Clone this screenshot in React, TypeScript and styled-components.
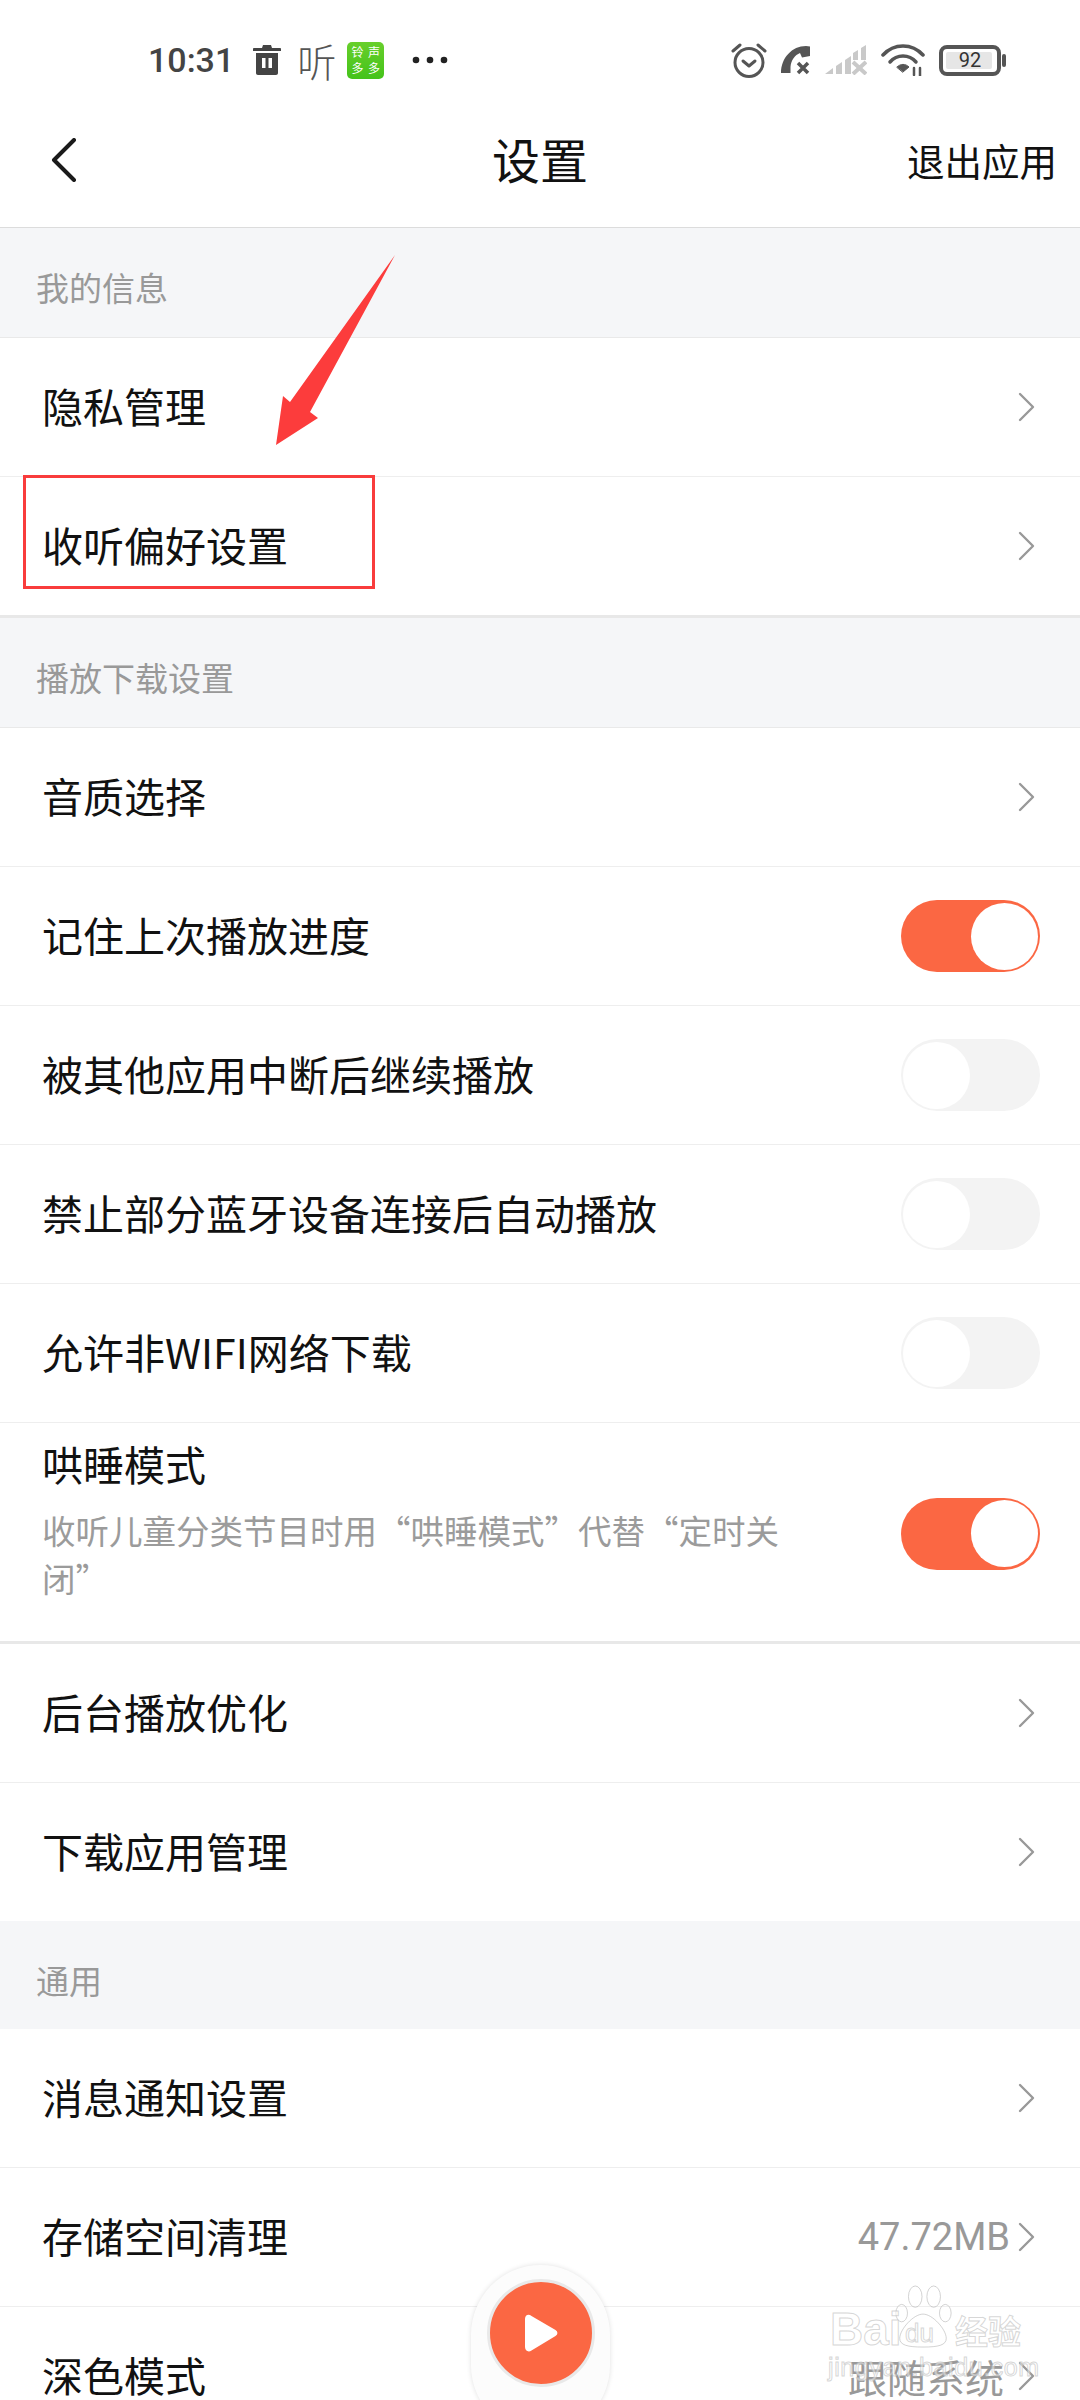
import styled, { createGlobalStyle } from 'styled-components'

const GlobalStyle = createGlobalStyle`
  html, body {
    margin: 0;
    padding: 0;
    background: #fff;
  }
  * {
    box-sizing: border-box;
  }
`

const cjk = `"Noto Sans CJK SC", "Noto Sans", sans-serif`

// Page shell
const Page = styled.div`
  position: relative;
  width: 1080px;
  height: 2400px;
  overflow: hidden;
  background: #fff;
  font-family: ${cjk};
  color: #111;
`

// Status bar
const StatusBar = styled.div`
  height: 92px;
  display: flex;
  align-items: center;
  justify-content: space-between;
  padding: 28px 72px 0 148px;
`

const StatusLeft = styled.div`
  display: flex;
  align-items: center;
`

const StatusRight = styled.div`
  display: flex;
  align-items: center;
  gap: 14px;
`

const Clock = styled.span`
  font-family: Roboto, sans-serif;
  font-weight: 500;
  font-size: 34px;
  color: #444;
  margin-right: 19px;
`

const TingGlyph = styled.span`
  font-size: 39px;
  font-weight: 300;
  line-height: 40px;
  color: #555;
  margin: 0 11px 0 16px;
`

const RingBadge = styled.span`
  width: 37px;
  height: 37px;
  border-radius: 5px;
  background: linear-gradient(to bottom, #68cf2c, #44c31a);
  display: grid;
  grid-template-columns: 1fr 1fr;
  place-items: center;
  padding: 3px 2px;
  color: #fff;
  font-size: 12px;
  line-height: 14px;
  margin-right: 28px;
`

const BatteryBox = styled.span`
  position: relative;
  width: 62px;
  height: 31px;
  border: 4px solid #555;
  border-radius: 8px;
  display: flex;
  align-items: center;
  justify-content: center;
  margin-right: 7px;
  &::before {
    content: '';
    position: absolute;
    left: 3px;
    right: 5px;
    top: 3px;
    bottom: 3px;
    background: #e6e6e6;
    border-radius: 2px;
  }
  &::after {
    content: '';
    position: absolute;
    right: -9px;
    top: 5px;
    width: 4px;
    height: 13px;
    background: #555;
    border-radius: 2px;
  }
`

const BatteryText = styled.span`
  position: relative;
  font-family: Roboto, sans-serif;
  font-size: 20px;
  line-height: 20px;
  color: #333;
`

// Nav bar
const NavBar = styled.div`
  height: 136px;
  display: grid;
  grid-template-columns: 1fr auto 1fr;
  align-items: center;
  padding: 0 23px;
  border-bottom: 1px solid #dcdcdc;
`

const BackButton = styled.span`
  display: flex;
  align-items: center;
  margin-left: 28px;
`

const NavTitle = styled.h1`
  margin: 0 0 3px;
  font-size: 48px;
  font-weight: 400;
  color: #111;
`

const NavAction = styled.span`
  justify-self: end;
  font-size: 37.5px;
  color: #111;
`

// Settings list
const SectionHead = styled.div<{ $plain?: boolean }>`
  height: ${(p) => (p.$plain ? 108 : 110)}px;
  display: flex;
  align-items: center;
  padding: 9px 0 0 36px;
  background: #f5f6f8;
  font-size: 33px;
  color: #999;
  border-bottom: ${(p) => (p.$plain ? 'none' : '1px solid #e9e9e9')};
`

const rowHeight = { normal: 139, last: 141, flush: 138 }

const rowBorder = {
  normal: '1px solid #eeeeee',
  last: '3px solid #e8e8e8',
  flush: 'none',
}

type RowKind = keyof typeof rowHeight

const Row = styled.div<{ $kind?: RowKind }>`
  height: ${(p) => rowHeight[p.$kind ?? 'normal']}px;
  display: flex;
  align-items: center;
  justify-content: space-between;
  padding: 0 44px 0 42px;
  border-bottom: ${(p) => rowBorder[p.$kind ?? 'normal']};
  background: #fff;
`

const TallRow = styled(Row)`
  height: 221px;
  padding-top: 3px;
  border-bottom: 3px solid #e8e8e8;
`

const RowLabel = styled.span`
  font-size: 41px;
  line-height: 56px;
  margin-bottom: 4px;
  color: #111;
`

const RowText = styled.div`
  width: 762px;
  align-self: flex-start;
  display: flex;
  flex-direction: column;
  padding-top: 9px;
`

const RowHint = styled.span`
  font-size: 33.5px;
  line-height: 48px;
  color: #9b9b9b;
  margin-top: 11px;
`

const RowTail = styled.span`
  display: flex;
  align-items: center;
  gap: 8px;
`

const RowValue = styled.span<{ $latin?: boolean }>`
  font-size: ${(p) => (p.$latin ? 38 : 39)}px;
  font-family: ${(p) => (p.$latin ? 'Roboto, sans-serif' : cjk)};
  font-weight: 400;
  color: #999;
  margin-right: ${(p) => (p.$latin ? 0 : 6)}px;
`

const Toggle = styled.span<{ $on?: boolean }>`
  width: 139px;
  height: 72px;
  margin-right: -4px;
  border-radius: 36px;
  display: flex;
  align-items: center;
  padding: 0 2px;
  justify-content: ${(p) => (p.$on ? 'flex-end' : 'flex-start')};
  background: ${(p) => (p.$on ? '#fb6743' : '#f3f3f3')};
`

const Knob = styled.span`
  width: 67px;
  height: 67px;
  border-radius: 50%;
  background: #fff;
`

// Floating play button
const PlayDock = styled.div`
  position: absolute;
  left: 471px;
  top: 2265px;
  width: 139px;
  height: 170px;
  border-radius: 70px;
  background: #fcfcfc;
  box-shadow: 0 0 5px rgba(0, 0, 0, 0.12);
  display: flex;
  justify-content: center;
  padding-top: 14px;
`

const PlayButton = styled.div`
  width: 108px;
  height: 108px;
  border-radius: 50%;
  background: #fb6743;
  border: 3px solid #e9e9e9;
  display: flex;
  align-items: center;
  justify-content: center;
`

// Annotations on top of the screenshot
const Highlight = styled.div`
  position: absolute;
  left: 23px;
  top: 475px;
  width: 352px;
  height: 114px;
  border: 3px solid #f93c3c;
`

const ArrowMark = styled.svg`
  position: absolute;
  left: 270px;
  top: 250px;
`

const Watermark = styled.div`
  position: absolute;
  left: 828px;
  top: 2283px;
  width: 200px;
  height: 96px;
  color: rgba(255, 255, 255, 0.5);
  -webkit-text-stroke: 1px rgba(180, 180, 180, 0.55);
`

const WatermarkPaw = styled.svg`
  position: absolute;
  left: 65px;
  top: 2px;
`

const WatermarkBrand = styled.span`
  position: absolute;
  left: 2px;
  top: 21px;
  font-family: "Liberation Sans", sans-serif;
  font-weight: 700;
  font-size: 46px;
  line-height: 50px;
`

const WatermarkDu = styled.span`
  position: absolute;
  left: 77px;
  top: 36px;
  font-family: "Liberation Sans", sans-serif;
  font-size: 26px;
  line-height: 28px;
`

const WatermarkCn = styled.span`
  position: absolute;
  left: 127px;
  top: 27px;
  font-size: 33px;
  font-weight: 700;
  line-height: 40px;
`

const WatermarkUrl = styled.span`
  position: absolute;
  left: 0;
  top: 70px;
  font-family: "Liberation Sans", sans-serif;
  font-size: 25px;
  line-height: 28px;
  letter-spacing: 0.6px;
`

const Chevron = () => (
  <svg width="18" height="30" viewBox="0 0 18 30" fill="none">
    <path d="M2 2l13 13L2 28" stroke="#999" strokeWidth="2.4" strokeLinecap="round" strokeLinejoin="round" />
  </svg>
)

const TrashIcon = () => (
  <svg width="28" height="32" viewBox="0 0 28 32">
    <path
      fill="#444"
      fillRule="evenodd"
      d="M10 1h8l1 3h8c.6 0 1 .5 1 1v2H0V5c0-.5.4-1 1-1h8zM3 9h22v20c0 1.200-.8 2-2 2H5c-1.200 0-2-.8-2-2zm6 5v10h3.500V14zm6.500 0v10H19V14z"
    />
  </svg>
)

const MoreDots = () => (
  <svg width="38" height="8" viewBox="0 0 38 8" fill="#222">
    <circle cx="4" cy="4" r="3.300" />
    <circle cx="18" cy="4" r="3.300" />
    <circle cx="32" cy="4" r="3.300" />
  </svg>
)

const AlarmIcon = () => (
  <svg width="36" height="36" viewBox="0 0 36 36" fill="none" stroke="#555">
    <circle cx="18" cy="20.500" r="14" strokeWidth="3" />
    <path d="M12 19l6 5 6-5" strokeWidth="3" strokeLinecap="round" strokeLinejoin="round" />
    <path d="M2 9l7-6M34 9l-7-6" strokeWidth="3" strokeLinecap="round" />
  </svg>
)

const MissedCallIcon = () => (
  <svg width="30" height="30" viewBox="0 0 30 30">
    <path
      fill="#555"
      d="M0 28C0 13 11 1 25 1l4 .5V11l-8 1.500-2-4.500C14 10 10 15 9.500 22v6z"
    />
    <path d="M17 18l10 10M27 18L17 28" stroke="#555" strokeWidth="3.500" fill="none" />
  </svg>
)

const SignalIcon = () => (
  <svg width="42" height="30" viewBox="0 0 42 30" fill="#c9c9c9">
    <path d="M0 29l8-6v6zM11 21l6-4v12h-6zM20 15l6-4v18h-6zM28 8l5-3v10h-5zM36 3l5-3v15h-5z" />
    <path d="M28 17l13 12M41 17L28 29" stroke="#c9c9c9" strokeWidth="4" fill="none" />
  </svg>
)

const WifiIcon = () => (
  <svg width="44" height="32" viewBox="0 0 44 32" fill="none" stroke="#555" strokeLinecap="round">
    <path d="M2 11c11-12 29-12 40 0" strokeWidth="3.500" />
    <path d="M9 18c7-8 19-8 26 0" strokeWidth="3.500" />
    <path d="M16 23c3.500-3.500 8.500-3.500 12 0l-6 5z" fill="#555" strokeWidth="1" />
    <path d="M33 24v7M39 32v-8" strokeWidth="2.500" />
  </svg>
)

const PlayGlyph = () => (
  <svg width="34" height="38" viewBox="0 0 34 38">
    <path
      fill="#fff"
      d="M1 5c0-4 3.500-5.500 6.500-3l24 14c2.500 1.500 2.500 4.500 0 6l-24 14.500C4.500 38.500 1 37 1 33z"
    />
  </svg>
)

const navRow = (label: string, kind?: RowKind) => (
  <Row $kind={kind}>
    <RowLabel>{label}</RowLabel>
    <Chevron />
  </Row>
)

const switchRow = (label: string, on?: boolean) => (
  <Row>
    <RowLabel>{label}</RowLabel>
    <Toggle $on={on}>
      <Knob />
    </Toggle>
  </Row>
)

export default function App() {
  return (
    <Page>
      <GlobalStyle />

      <StatusBar>
        <StatusLeft>
          <Clock>10:31</Clock>
          <TrashIcon />
          <TingGlyph>听</TingGlyph>
          <RingBadge>
            <span>铃</span>
            <span>声</span>
            <span>多</span>
            <span>多</span>
          </RingBadge>
          <MoreDots />
        </StatusLeft>
        <StatusRight>
          <AlarmIcon />
          <MissedCallIcon />
          <SignalIcon />
          <WifiIcon />
          <BatteryBox>
            <BatteryText>92</BatteryText>
          </BatteryBox>
        </StatusRight>
      </StatusBar>

      <NavBar>
        <BackButton>
          <svg width="26" height="44" viewBox="0 0 26 44" fill="none">
            <path d="M23 2L3 22l20 20" stroke="#1a1a1a" strokeWidth="4" strokeLinecap="round" strokeLinejoin="round" />
          </svg>
        </BackButton>
        <NavTitle>设置</NavTitle>
        <NavAction>退出应用</NavAction>
      </NavBar>

      <SectionHead>我的信息</SectionHead>
      {navRow('隐私管理')}
      {navRow('收听偏好设置', 'last')}

      <SectionHead>播放下载设置</SectionHead>
      {navRow('音质选择')}
      {switchRow('记住上次播放进度', true)}
      {switchRow('被其他应用中断后继续播放')}
      {switchRow('禁止部分蓝牙设备连接后自动播放')}
      {switchRow('允许非WIFI网络下载')}
      <TallRow>
        <RowText>
          <RowLabel>哄睡模式</RowLabel>
          <RowHint>收听儿童分类节目时用“哄睡模式”代替“定时关闭”</RowHint>
        </RowText>
        <Toggle $on>
          <Knob />
        </Toggle>
      </TallRow>
      {navRow('后台播放优化')}
      {navRow('下载应用管理', 'flush')}

      <SectionHead $plain>通用</SectionHead>
      {navRow('消息通知设置')}
      <Row>
        <RowLabel>存储空间清理</RowLabel>
        <RowTail>
          <RowValue $latin>47.72MB</RowValue>
          <Chevron />
        </RowTail>
      </Row>
      <Row>
        <RowLabel>深色模式</RowLabel>
        <RowTail>
          <RowValue>跟随系统</RowValue>
          <Chevron />
        </RowTail>
      </Row>

      <PlayDock>
        <PlayButton>
          <PlayGlyph />
        </PlayButton>
      </PlayDock>

      <Highlight />
      <ArrowMark width="130" height="200" viewBox="0 0 130 200">
        <polygon points="125,5 20,152 13,146 6,195 48,168 40,162" fill="#fc3c3c" />
      </ArrowMark>

      <Watermark>
        <WatermarkPaw width="60" height="64" viewBox="0 0 60 66" fill="none" stroke="rgba(180,180,180,0.6)">
          <ellipse cx="22" cy="12" rx="7" ry="11" />
          <ellipse cx="41" cy="12" rx="7" ry="11" />
          <ellipse cx="8" cy="29" rx="6" ry="9" />
          <ellipse cx="53" cy="29" rx="6" ry="9" />
          <path d="M30 30c10 0 24 16 24 25 0 7-8 9-24 9S6 62 6 55c0-9 14-25 24-25z" />
        </WatermarkPaw>
        <WatermarkBrand>Bai</WatermarkBrand>
        <WatermarkDu>du</WatermarkDu>
        <WatermarkCn>经验</WatermarkCn>
        <WatermarkUrl>jingyan.baidu.com</WatermarkUrl>
      </Watermark>
    </Page>
  )
}
